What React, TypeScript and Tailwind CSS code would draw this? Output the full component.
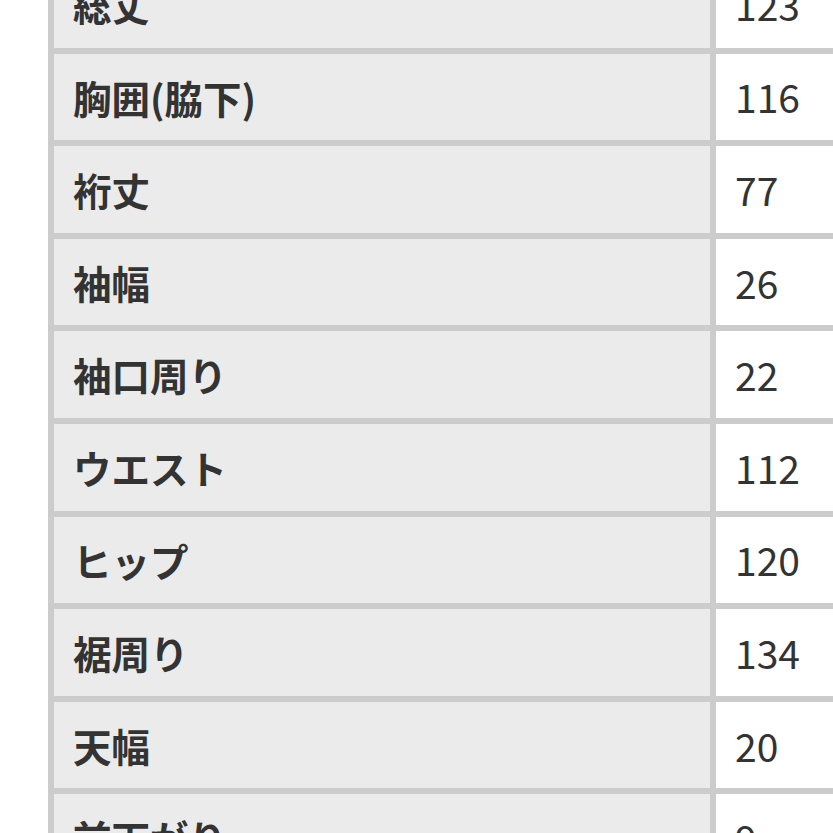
import React from "react";

const rows: [string, string][] = [
  ["総丈", "123"],
  ["胸囲(脇下)", "116"],
  ["裄丈", "77"],
  ["袖幅", "26"],
  ["袖口周り", "22"],
  ["ウエスト", "112"],
  ["ヒップ", "120"],
  ["裾周り", "134"],
  ["天幅", "20"],
  ["前下がり", "9"],
];

export default function App() {
  return (
    <div
      className="w-[833px] h-[833px] overflow-hidden bg-white"
      style={{ fontFamily: '"Noto Sans CJK JP", "Noto Sans", sans-serif' }}
    >
      <div className="mt-[-45px] ml-[48px] w-[900px] bg-[#cccccc] p-[6px] flex flex-col gap-[6px]">
        {rows.map(([k, v]) => (
          <div key={k} className="grid grid-cols-[656px_1fr] gap-[6px] h-[86.6px]">
            <div className="bg-[#ebebeb] flex items-center pl-[19px] text-[38.5px] font-bold text-[#333333] leading-none">
              {k}
            </div>
            <div className="bg-white flex items-center pl-[19px] text-[39px] text-[#333333] leading-none">
              {v}
            </div>
          </div>
        ))}
      </div>
    </div>
  );
}
